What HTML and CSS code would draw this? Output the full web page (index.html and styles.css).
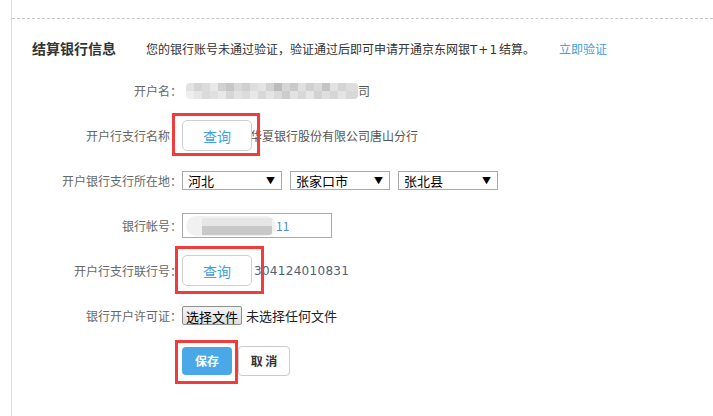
FILE: index.html
```html
<!DOCTYPE html>
<html lang="zh-CN">
<head>
    <meta charset="UTF-8">
    <meta name="viewport" content="width=device-width, initial-scale=1.0">
    <title>结算银行信息</title>
    <link rel="stylesheet" href="styles.css">
</head>
<body>
    <div class="panel">
        <div class="section">
            <div class="section-head">
                <h2 class="section-title">结算银行信息</h2>
                <p class="notice">您的银行账号未通过验证，验证通过后即可申请开通京东网银<span class="tplus">T+1</span>结算。</p>
                <a class="verify-link" href="#">立即验证</a>
            </div>

            <div class="form">
                <div class="row">
                    <label class="label">开户名：</label>
                    <span class="masked masked-name"></span>
                    <span class="value">司</span>
                </div>

                <div class="row">
                    <label class="label">开户行支行名称<span class="hide">：</span></label>
                    <span class="mark mark-a"><button class="btn-query">查询</button></span>
                    <span class="value bank-name">华夏银行股份有限公司唐山分行</span>
                </div>

                <div class="row">
                    <label class="label">开户银行支行所在地：</label>
                    <div class="selects">
                        <span class="select">河北<i class="arrow">▼</i></span>
                        <span class="select">张家口市<i class="arrow">▼</i></span>
                        <span class="select">张北县<i class="arrow">▼</i></span>
                    </div>
                </div>

                <div class="row">
                    <label class="label">银行帐号：</label>
                    <div class="text-input">
                        <span class="masked masked-account"></span>
                        <span class="account-tail">11</span>
                    </div>
                </div>

                <div class="row">
                    <label class="label">开户行支行联行号：</label>
                    <span class="mark mark-b"><button class="btn-query">查询</button></span>
                    <span class="value bank-code">304124010831</span>
                </div>

                <div class="row">
                    <label class="label">银行开户许可证：</label>
                    <button class="btn-file">选择文件</button>
                    <span class="file-name">未选择任何文件</span>
                </div>

                <div class="row">
                    <span class="label"></span>
                    <span class="mark mark-c"><button class="btn-save">保存</button></span>
                    <button class="btn-cancel">取 消</button>
                </div>
            </div>
        </div>
    </div>
</body>
</html>
```

FILE: styles.css
```css
body {
    margin: 0;
    font-family: "Noto Sans CJK SC", "Liberation Sans", sans-serif;
    font-size: 12px;
    color: #333;
    background: #fff;
}

.panel {
    margin-left: 11px;
    border-left: 1px solid #ddd;
    padding-top: 18px;
    min-height: 100vh;
    box-sizing: border-box;
}

.section {
    border-top: 1px dashed #c8c8c8;
}

.section-head {
    display: flex;
    align-items: center;
    height: 20px;
    margin-top: 19px;
    padding-left: 20px;
}

.section-title {
    margin: 0;
    font-size: 14px;
    font-weight: bold;
    color: #333;
}

.notice {
    margin: 0 0 0 30px;
    font-size: 12px;
    color: #333;
}

.tplus {
    font-family: "DejaVu Sans", sans-serif;
    letter-spacing: 1px;
    padding-right: 1px;
}

.verify-link {
    margin-left: 24px;
    color: #3d9fe2;
    text-decoration: none;
}

.form {
    margin-top: 10px;
}

.row {
    display: flex;
    align-items: center;
    height: 45px;
}

.label {
    width: 170px;
    text-align: right;
    color: #666;
    flex-shrink: 0;
}

.hide {
    visibility: hidden;
}

.value {
    color: #555;
}

.masked {
    display: inline-block;
    border-radius: 4px;
    filter: blur(0.4px);
}

.masked-name {
    width: 172px;
    height: 16px;
    margin-left: 4px;
    background:
        linear-gradient(to right, #e2e2e2 0 8px, #d4d4d4 8px 16px, #dcdcdc 16px 24px, #e8e8e8 24px 32px, #d0d0d0 32px 40px, #c6c6c6 40px 48px, #d8d8d8 48px 56px, #cfcfcf 56px 64px, #dedede 64px 72px, #e4e4e4 72px 80px, #d2d2d2 80px 88px, #bcbcbc 88px 96px, #d6d6d6 96px 104px, #cacaca 104px 112px, #e0e0e0 112px 120px, #d0d0d0 120px 128px, #dadada 128px 136px, #c4c4c4 136px 144px, #e2e2e2 144px 152px, #d4d4d4 152px 160px, #dddddd 160px 172px) top / 100% 8px no-repeat,
        linear-gradient(to right, #eeeeee 0 8px, #e6e6e6 8px 16px, #dadada 16px 24px, #e0e0e0 24px 32px, #e8e8e8 32px 40px, #d6d6d6 40px 48px, #e2e2e2 48px 56px, #dcdcdc 56px 64px, #e8e8e8 64px 72px, #d8d8d8 72px 80px, #e4e4e4 80px 88px, #dadada 88px 96px, #cccccc 96px 104px, #e2e2e2 104px 112px, #d8d8d8 112px 120px, #e6e6e6 120px 128px, #d2d2d2 128px 136px, #dedede 136px 144px, #d6d6d6 144px 152px, #e4e4e4 152px 160px, #d8d8d8 160px 172px) bottom / 100% 8px no-repeat;
}

.mark {
    position: relative;
    display: inline-block;
    line-height: 0;
}

.mark::after {
    content: "";
    position: absolute;
    border: 3px solid #f23b3b;
    pointer-events: none;
}

.mark-a::after {
    left: -10px;
    top: -7px;
    right: -8px;
    bottom: -5px;
}

.mark-b::after {
    left: -7px;
    top: -9px;
    right: -12px;
    bottom: -8px;
}

.mark-c::after {
    left: -7px;
    top: -7px;
    right: -6px;
    bottom: -9px;
}

.btn-query {
    width: 70px;
    height: 31px;
    border: 1px solid #cfcfcf;
    border-radius: 5px;
    background: #fff;
    color: #3d9fe2;
    font-family: inherit;
    font-size: 14px;
    padding: 0;
}

.bank-name {
    margin-left: -2px;
}

.bank-code {
    margin-left: 2px;
    color: #4f5f73;
    font-family: "DejaVu Sans", sans-serif;
    font-size: 12px;
    letter-spacing: 0.3px;
}

.selects {
    display: flex;
    gap: 8px;
}

.select {
    display: flex;
    align-items: center;
    justify-content: space-between;
    box-sizing: border-box;
    width: 100px;
    height: 19px;
    padding: 0 6px 0 5px;
    border: 1px solid #a9a9a9;
    font-size: 13px;
    color: #000;
}

.arrow {
    font-style: normal;
    font-size: 9px;
}

.text-input {
    display: flex;
    align-items: center;
    box-sizing: border-box;
    width: 150px;
    height: 25px;
    border: 1px solid #a9a9a9;
    padding-left: 3px;
}

.masked-account {
    width: 90px;
    height: 20px;
    border-radius: 10px;
    background:
        linear-gradient(#e6e6e6, #e6e6e6) 16px 2px / 70px 8px no-repeat,
        linear-gradient(#c8c8c8, #c8c8c8) 16px 10px / 70px 9px no-repeat,
        #f1f1f1;
}

.account-tail {
    color: #4a8fc8;
}

.btn-file {
    box-sizing: border-box;
    width: 60px;
    height: 19px;
    padding: 0;
    border: 1px solid #8f8f8f;
    border-radius: 2px;
    background: linear-gradient(#f4f4f4, #dedede);
    font-family: inherit;
    font-size: 13px;
    color: #000;
}

.file-name {
    margin-left: 4px;
    font-size: 13px;
    color: #222;
}

.btn-save {
    width: 50px;
    height: 28px;
    border: none;
    border-radius: 4px;
    background: #4aa8e8;
    color: #fff;
    font-family: inherit;
    font-size: 12px;
    font-weight: bold;
    padding: 0;
}

.btn-cancel {
    margin-left: 6px;
    width: 52px;
    height: 30px;
    border: 1px solid #ccc;
    border-radius: 4px;
    background: #fff;
    color: #333;
    font-family: inherit;
    font-size: 12px;
    font-weight: bold;
    padding: 0;
}
```
